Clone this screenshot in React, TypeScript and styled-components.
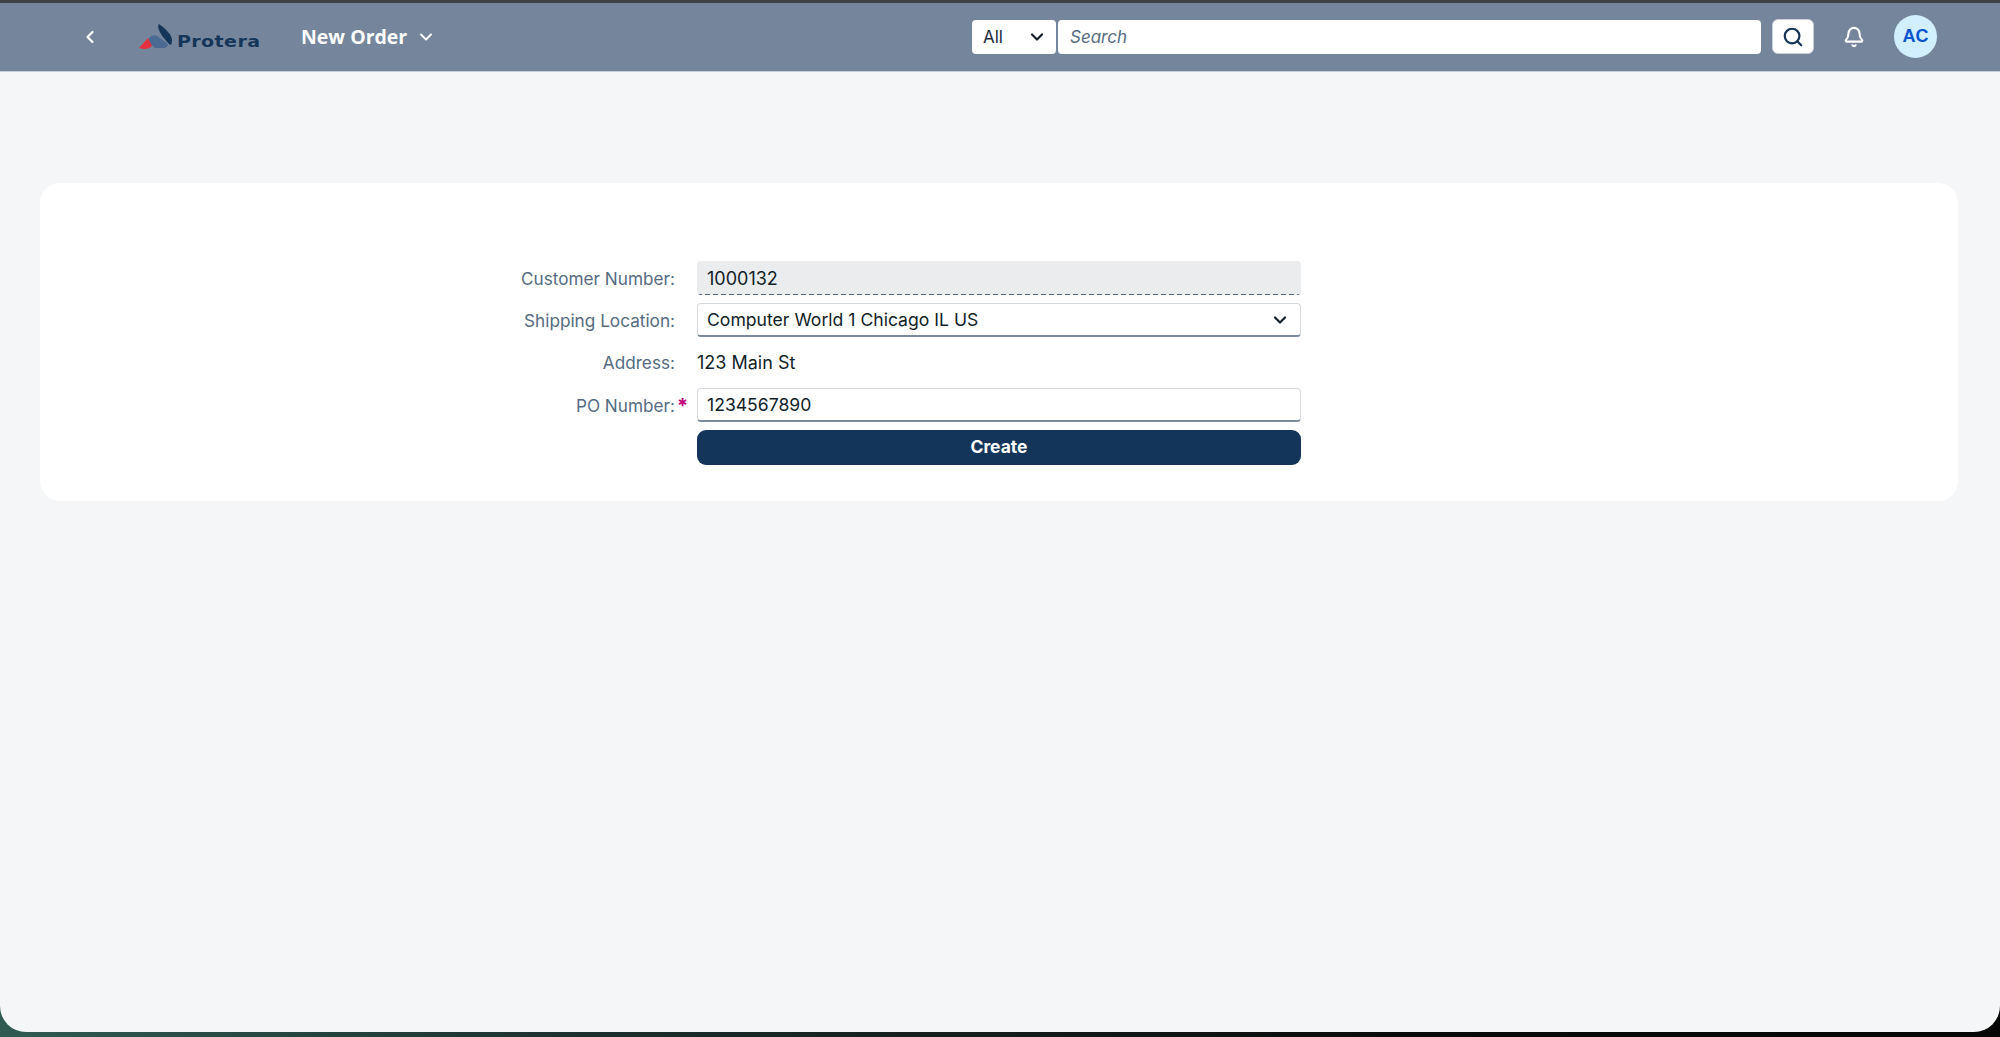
import styled, { createGlobalStyle } from 'styled-components';
import { Bell, ChevronDown, ChevronLeft, Search } from 'lucide-react';

const GlobalStyle = createGlobalStyle`
  html, body {
    margin: 0;
    padding: 0;
    height: 100%;
    overflow: hidden;
  }
  body {
    font-family: Inter, "Liberation Sans", sans-serif;
    background: linear-gradient(90deg, #2f5b52 0%, #1c2e2b 30%, #0a0a0a 70%, #050505 100%);
  }
`;

const Screen = styled.div`
  box-sizing: border-box;
  height: 1037px;
  padding-bottom: 5px;
`;

const Window = styled.div`
  display: flex;
  flex-direction: column;
  height: 100%;
  overflow: hidden;
  background: #f5f6f7;
  border-radius: 0 0 26px 26px;
`;

const TopEdge = styled.div`
  height: 3px;
  flex: none;
  background: #3f4146;
`;

const Header = styled.header`
  display: flex;
  align-items: center;
  flex: none;
  box-sizing: border-box;
  height: 69px;
  padding: 0 63px 1px 79px;
  background: #75869c;
  border-bottom: 1px solid #c5ceda;
`;

const BackButton = styled.button`
  display: flex;
  align-items: center;
  justify-content: center;
  width: 22px;
  height: 22px;
  padding: 0;
  margin-right: 38px;
  border: 0;
  background: none;
  color: #fff;
`;

const Logo = styled.div`
  display: flex;
  align-items: flex-end;
  gap: 5px;
  width: 124px;
  margin-right: 38px;
`;

const LogoText = styled.span`
  font-family: "DejaVu Sans", sans-serif;
  font-size: 15px;
  font-weight: 700;
  line-height: 15px;
  letter-spacing: 0.3px;
  color: #153659;
  transform: scaleX(1.27);
  transform-origin: left center;
`;

const Title = styled.div`
  display: flex;
  align-items: center;
  gap: 9px;
  font-family: "Open Sans", sans-serif;
  font-size: 19.5px;
  font-weight: 700;
  color: #fff;
`;

const SearchArea = styled.div`
  display: flex;
  align-items: center;
  margin-left: auto;
`;

const ScopeSelect = styled.div`
  display: flex;
  align-items: center;
  justify-content: space-between;
  box-sizing: border-box;
  width: 84px;
  height: 34px;
  padding: 0 9px 0 11px;
  margin-right: 2px;
  background: #fff;
  border-radius: 4px;
  font-size: 17px;
  color: #1d2d3e;
`;

const SearchInput = styled.div`
  display: flex;
  align-items: center;
  box-sizing: border-box;
  width: 703px;
  height: 34px;
  padding: 0 12px;
  background: #fff;
  border-radius: 4px;
  font-size: 17px;
  font-style: italic;
  color: #556b82;
`;

const SearchButton = styled.button`
  display: flex;
  align-items: center;
  justify-content: center;
  box-sizing: border-box;
  width: 42px;
  height: 35px;
  padding: 0;
  margin-left: 11px;
  background: #fff;
  border: 1px solid #c8d0da;
  border-radius: 6px;
  color: #153659;
`;

const BellButton = styled.button`
  display: flex;
  align-items: center;
  justify-content: center;
  width: 24px;
  height: 24px;
  padding: 0;
  margin-left: 28px;
  border: 0;
  background: none;
  color: #fff;
`;

const Avatar = styled.div`
  display: flex;
  align-items: center;
  justify-content: center;
  width: 43px;
  height: 43px;
  margin-left: 28px;
  border-radius: 50%;
  background: #d1efff;
  color: #0854cf;
  font-family: "Liberation Sans", sans-serif;
  font-size: 18px;
  font-weight: 700;
`;

const Content = styled.main`
  flex: 1;
  padding: 111px 42px 0 40px;
`;

const Card = styled.section`
  box-sizing: border-box;
  height: 318px;
  padding-top: 78px;
  background: #fff;
  border-radius: 20px;
`;

const Form = styled.div`
  display: grid;
  grid-template-columns: 635px 604px;
  grid-auto-rows: 34px;
  column-gap: 22px;
  row-gap: 8.4px;
  align-items: center;
`;

const Label = styled.label`
  position: relative;
  text-align: right;
  font-size: 17.2px;
  color: #556b82;
`;

const Required = styled.span`
  position: absolute;
  left: 100%;
  top: -1px;
  margin-left: 2px;
  font-size: 20px;
  font-weight: 700;
  color: #c0047a;
`;

const Field = styled.div<{ $readOnly?: boolean }>`
  display: flex;
  align-items: center;
  justify-content: space-between;
  box-sizing: border-box;
  height: 34px;
  padding: 0 10px 0 ${({ $readOnly }) => ($readOnly ? '10px' : '9px')};
  font-size: ${({ $readOnly }) => ($readOnly ? '18px' : '17.6px')};
  color: #131e29;
  border-radius: 4px;
  background: ${({ $readOnly }) =>
    $readOnly
      ? 'repeating-linear-gradient(90deg, #556b82 0 5px, transparent 5px 8px) bottom / 100% 1px no-repeat, #eaecee'
      : '#fff'};
  border: ${({ $readOnly }) => ($readOnly ? '0' : '1px solid #d5dadf')};
  border-bottom: ${({ $readOnly }) => ($readOnly ? '0' : '2px solid #7b8a9c')};
`;

const StaticValue = styled.div`
  font-size: 18px;
  color: #131e29;
`;

const CreateButton = styled.button`
  grid-column: 2;
  height: 35px;
  padding: 0 0 2px;
  border: 0;
  border-radius: 9px;
  background: #14355a;
  color: #fff;
  font-family: Inter, "Liberation Sans", sans-serif;
  font-size: 17.5px;
  font-weight: 700;
`;

const LogoMark = () => (
  <svg width="33" height="26" viewBox="0 0 33 26">
    <path d="M20 0 C26 4 33 11 33 16 C33 20 32 22 30 20 C25 15 21 9 19.5 5 C19 3 19 1 20 0 Z" fill="#153659" />
    <path d="M9 16 C11 12 15 10 18 12 L28 19 C30 21 28 24 25 24 L16 24 C13 22 11 19 9 16 Z" fill="#4a6a94" />
    <path d="M0 24 L9 14 L13 22 C11 24 8 25 5 25 Z" fill="#e3313d" />
  </svg>
);

const App = () => {
  return (
    <>
      <GlobalStyle />
      <Screen>
        <Window>
          <TopEdge />
          <Header>
            <BackButton>
              <ChevronLeft size={20} strokeWidth={2.6} />
            </BackButton>
            <Logo>
              <LogoMark />
              <LogoText>Protera</LogoText>
            </Logo>
            <Title>
              New Order
              <ChevronDown size={20} strokeWidth={2.2} />
            </Title>
            <SearchArea>
              <ScopeSelect>
                All
                <ChevronDown size={20} strokeWidth={2.6} color="#131e29" />
              </ScopeSelect>
              <SearchInput>Search</SearchInput>
              <SearchButton>
                <Search size={22} strokeWidth={2.4} />
              </SearchButton>
              <BellButton>
                <Bell size={22} strokeWidth={2.3} />
              </BellButton>
              <Avatar>AC</Avatar>
            </SearchArea>
          </Header>
          <Content>
            <Card>
              <Form>
                <Label>Customer Number:</Label>
                <Field $readOnly>1000132</Field>
                <Label>Shipping Location:</Label>
                <Field>
                  Computer World 1 Chicago IL US
                  <ChevronDown size={20} strokeWidth={2.6} />
                </Field>
                <Label>Address:</Label>
                <StaticValue>123 Main St</StaticValue>
                <Label>
                  PO Number:<Required>*</Required>
                </Label>
                <Field>1234567890</Field>
                <CreateButton>Create</CreateButton>
              </Form>
            </Card>
          </Content>
        </Window>
      </Screen>
    </>
  );
};

export default App;
